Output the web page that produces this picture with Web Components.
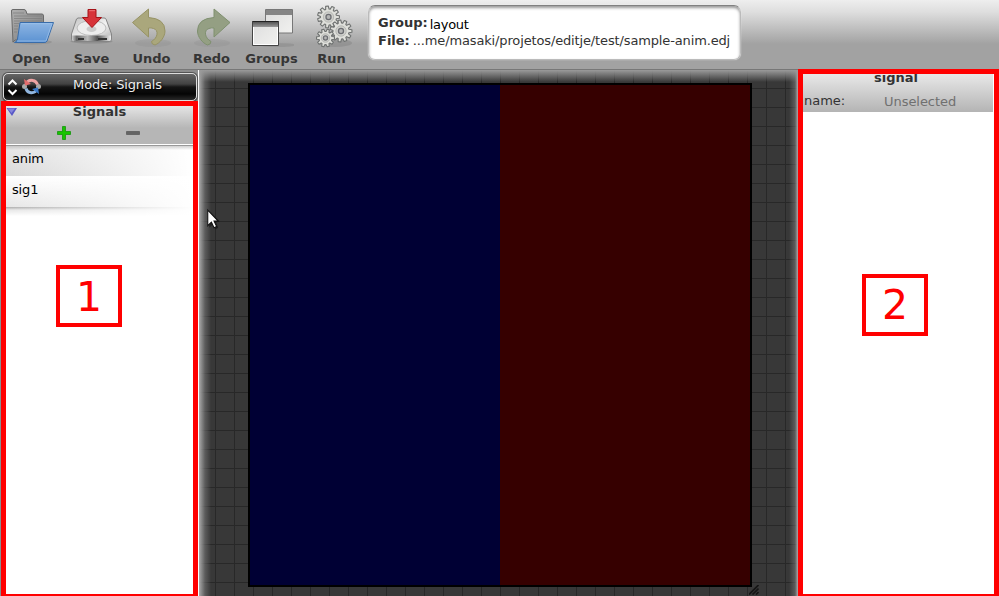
<!DOCTYPE html>
<html lang="en">
<head>
<meta charset="utf-8">
<title>Editje</title>
<style>
html,body{margin:0;width:999px;height:596px;overflow:hidden}
body{font:13px/16px "DejaVu Sans",sans-serif;color:#333}
</style>
</head>
<body>
<edj-app></edj-app>
<script>
const define = (name, css, html) => customElements.define(name, class extends HTMLElement {
  constructor() {
    super();
    const t = document.createElement('template');
    t.innerHTML = `<style>*{box-sizing:border-box}${css}</style>${html}`;
    this.attachShadow({mode: 'open'}).append(t.content.cloneNode(true));
  }
});

const gear = (cx, cy, r, n) => {
  let d = '';
  for (let i = 0; i < n; i++) {
    const a = i * 2 * Math.PI / n, s = Math.PI / n;
    [[-.75, .73], [-.42, 1], [.42, 1], [.75, .73]].forEach(([o, k], j) => {
      d += (i || j ? 'L' : 'M') + (cx + Math.cos(a + o * s) * r * k).toFixed(2) + ' ' + (cy + Math.sin(a + o * s) * r * k).toFixed(2);
    });
  }
  return `<path d="${d}Z" fill="#dedfda" stroke="#6e7170" stroke-width="1.1" stroke-linejoin="round"/><circle cx="${cx}" cy="${cy}" r="${r * .47}" fill="#d0d1cd" stroke="#b6b8b4"/><circle cx="${cx}" cy="${cy}" r="${r * .23}" fill="#b4b5b4" stroke="#6b6d71" stroke-width="1.3"/>`;
};

const icons = {
  open: `<defs><linearGradient id="f" x2="0" y2="1"><stop stop-color="#8db5e3"/><stop offset="1" stop-color="#5b92d2"/></linearGradient><linearGradient id="g" x2="1" y2="1"><stop stop-color="#b0b0b0"/><stop offset="1" stop-color="#777"/></linearGradient></defs>
  <ellipse cx="22" cy="42" rx="20" ry="2.5" fill="#777" opacity=".35"/>
  <path d="M3 42 1.5 11Q1.3 9.5 3 9.500H14Q15.500 9.500 16 11L17 14H32Q33.500 14 33.500 16V40H5Z" fill="url(#g)" stroke="#696969"/>
  <path d="M3 13H14M4 16H32M4 18.500H32M4 21H32M4 23.500H9M4 26H8M4 29H8M4 32H7" stroke="#7d7d7d" stroke-width=".7"/>
  <path d="M10 22.500H43.500L37 41Q36.500 42.500 34 42.500H4.500Q7 42 7.500 39Z" fill="url(#f)" stroke="#386caa"/><path d="M11 23.700H42L36 41H7" fill="none" stroke="#a4c6ec" stroke-width=".7"/>`,
  save: `<defs><linearGradient id="f" x2="1" y2="1"><stop stop-color="#c3c3c3"/><stop offset=".55" stop-color="#f2f2f2"/><stop offset="1" stop-color="#aaa"/></linearGradient><linearGradient id="b"><stop stop-color="#cfcfcf"/><stop offset=".12" stop-color="#666"/><stop offset=".4" stop-color="#bbb"/><stop offset=".65" stop-color="#555"/><stop offset="1" stop-color="#eee"/></linearGradient></defs>
  <ellipse cx="21.500" cy="41.500" rx="21" ry="2" fill="#555" opacity=".25"/><g transform="translate(-1 0)"><path d="M9 18H35Q36.500 18 37 19L42.500 34V39Q42.500 41.500 40 41.500H4.500Q2.500 41.500 2.500 39V34L7.500 19Z" fill="url(#f)" stroke="#858585"/><ellipse cx="22.500" cy="28" rx="14.500" ry="7.500" fill="#ededed" stroke="#bdbdbd"/><ellipse cx="22.500" cy="29" rx="5" ry="3" fill="#ccc"/><path d="M3 35.500H42V39Q42 41 40 41H5Q3 41 3 39Z" fill="url(#b)"/><path d="M9 39h6M29 39h9" stroke="#333" stroke-width="2"/><path d="M19 9.500H27V17.500H32.500L23 27.500 13.500 17.500H19Z" fill="#d73339" stroke="#a41318"/><path d="M20.200 10.700H26" stroke="#ef777a"/></g>`,
  undo: `<ellipse cx="23" cy="43" rx="18" ry="4" fill="#777" opacity=".13"/><path d="M2.500 22.500 18.500 9V17.500Q35 18.500 35 31C35 37 30 43 25 45Q21.500 44.500 21.500 41.500C28 38 29 30 23.500 28.500Q21 27.500 18.500 28V37Z" fill="#aaa77c" stroke="#979365"/>`,
  redo: `<ellipse cx="22" cy="43" rx="18" ry="4" fill="#777" opacity=".13"/><path d="M40 22.500 24 9V17.500Q7.500 18.500 7.500 31C7.500 37 12.500 43 17.500 45Q21 44.500 21 41.500C14.500 38 13.500 30 19 28.500Q21.500 27.500 24 28V37Z" fill="#949f83" stroke="#7f906f"/>`,
  groups: `<defs><linearGradient id="w" x2="1" y2="1"><stop stop-color="#ddd"/><stop offset="1" stop-color="#f1f1ef"/></linearGradient><linearGradient id="t" x2="0" y2="1"><stop stop-color="#555"/><stop offset="1" stop-color="#999"/></linearGradient></defs><ellipse cx="27" cy="45" rx="18" ry="2" fill="#777" opacity=".3"/><path d="M15.500 9.500H42.500V33H15.500Z" fill="url(#w)" stroke="#777"/><path d="M16 10H42V15H16Z" fill="#858585"/><path d="M2.500 21.500H28.500V45.500H2.500Z" fill="url(#w)" stroke="#444"/><path d="M3 22H28V27H3Z" fill="url(#t)"/><path d="M2.500 21.500H28.500" stroke="#222"/><path d="M3.500 27V44.500H27.500V27" fill="none" stroke="#fff"/>`,
  run: `<ellipse cx="25" cy="43" rx="17" ry="4" fill="#666" opacity=".25"/>${gear(18.5, 17, 11, 11)}${gear(31, 31, 11, 11)}${gear(15.5, 38, 9, 10)}`
};

customElements.define('tool-button', class extends HTMLElement {
  constructor() {
    super();
    this.attachShadow({mode: 'open'}).innerHTML = `<style>:host{display:flex;flex-direction:column;align-items:center;width:60px;height:69px;font-weight:bold;color:#353535}svg{display:block;width:44px;height:50px;flex:none}span{line-height:16px;margin:1px 1px 0 0;white-space:nowrap}</style><svg viewBox="0 0 44 50">${icons[this.getAttribute('icon')]}</svg><span><slot></slot></span>`;
  }
});

define('file-info', `:host{display:flex;flex-direction:column;width:373px;height:55px;margin:5px 0 0 6px;padding:9px 9px 0 9px;background:#fff;border:1px solid #bbb;border-top:1px solid #808080;border-radius:7px;box-shadow:inset 0 2px 3px #999,0 0 1px #fff}
div{display:flex;height:18px;line-height:16px;gap:2px;white-space:nowrap}b{color:#333}.g{color:#000;position:relative;top:2px;letter-spacing:-.3px}.p{letter-spacing:-.14px;margin-left:1px}`,
`<div><b>Group:</b><span class="g">layout</span></div><div><b>File:</b><span class="p">...me/masaki/projetos/editje/test/sample-anim.edj</span></div>`);

define('tool-bar', `:host{display:flex;height:70px;background:linear-gradient(#eee 0,#dedede 12px,#a2a2a2 44px,#a2a2a2);border-bottom:1px solid #777;padding-left:2px}`,
`<tool-button icon="open">Open</tool-button><tool-button icon="save">Save</tool-button><tool-button icon="undo">Undo</tool-button><tool-button icon="redo">Redo</tool-button><tool-button icon="groups">Groups</tool-button><tool-button icon="run">Run</tool-button><file-info></file-info>`);

define('mode-selector', `:host{display:flex;align-items:center;margin:3px 2px 0 3px;height:28px;flex:none;border:1px solid #ddd;border-radius:5px;background:linear-gradient(#656565,#424242 10px,#151515 13px,#050505 20px,#292929);box-shadow:0 0 0 1px #555,0 1px 2px #111}svg{width:43px;height:26px}span{width:140px;margin-left:3px;text-align:center;padding:0 5px 4px 0;color:#eee;letter-spacing:-.14px;text-shadow:1px 1px 2px #000}`,
`<svg viewBox="0 0 43 26"><path d="M4.500 10.500 8.500 6.500 12.500 10.500M4.500 16 8.500 20 12.500 16" fill="none" stroke="#fff" stroke-width="2"/><circle cx="20.500" cy="12.500" r="2.500" fill="#aaa"/><circle cx="34.500" cy="12.500" r="2.500" fill="#aaa"/><path d="M22 10Q24 5.500 29 6.500Q32 7 33.500 10.500" fill="none" stroke="#eda4a4" stroke-width="3"/><path d="M20 5 21 11.500 27 10Z" fill="#e26c6d"/><path d="M33 15Q31 19.500 26 18.500Q23 18 22 14.500" fill="none" stroke="#91b6df" stroke-width="3"/><path d="M35 20 34 13.500 28 15Z" fill="#3979c8"/></svg><span>Mode: Signals</span>`);

define('signal-list', `:host{display:flex;flex-direction:column;flex:1;margin:1px 1px 0;background:#fff}
header{height:43px;background:linear-gradient(#eee,#d6d6d6 11px,#b6b6b6 26px);border-bottom:1px solid #fff;display:grid;grid-template-columns:65px 1fr 65px;grid-template-rows:17px 1fr;padding-top:1px;flex:none}
header>svg{width:62px;height:16px}b{text-align:center;line-height:17px}.tools{grid-column:1/4;display:flex;padding-left:56px;gap:55px}.tools svg{width:14px;height:14px;margin-top:6px}
.row{height:31px;padding:5px 0 0 11px;color:#000;flex:none;line-height:17px;letter-spacing:-.15px}.a{padding-top:4px;background:linear-gradient(#aaa8 0,#fff0 4px),linear-gradient(90deg,transparent,#fff 98%),linear-gradient(#e6e6e6,#d8d8d8);border-top:1px solid #999}.s{background:linear-gradient(90deg,transparent,#fff 98%),linear-gradient(#fff,#e6e6e6)}.edge{height:9px;background:linear-gradient(90deg,transparent,#fff 98%),linear-gradient(#aaa,#e7e7e7 3px,#fff)}`,
`<header><svg viewBox="0 0 62 16"><path d="M5.500 5H16L11 13Z" fill="#5959c7"/><path d="M6.500 5.500H14L10.500 10Z" fill="#8686dd"/></svg><b>Signals</b><div class="tools"><svg viewBox="0 0 14 14"><path d="M5.500 .5H8.500V5.500H13.500V8.500H8.500V13.500H5.500V8.500H.5V5.500H5.500Z" fill="#18c400" stroke="#079000" stroke-width=".7"/></svg><svg viewBox="0 0 14 14"><path d="M.5 5.500H13.500V8.500H.5Z" fill="#646464" stroke="#666"/></svg></div></header><div class="row a">anim</div><div class="row s">sig1</div><div class="edge"></div>`);

define('signals-panel', `:host{display:flex;flex-direction:column;width:199px;background:linear-gradient(90deg,#8d8d8d 198px,#fff 198px)}`, `<mode-selector></mode-selector><signal-list></signal-list>`);

define('edit-canvas', `:host{display:grid;place-items:start center;flex:1;padding:13px 0 0 3px;overflow:hidden;position:relative;
background:linear-gradient(#9a9a9a,#9a9a9a00 12px),linear-gradient(90deg,#aaa,#77777790 6px,transparent 12px),linear-gradient(270deg,#aaa,#77777790 3px,transparent 9px),repeating-linear-gradient(90deg,transparent 0 16px,#282828 16px 17px,transparent 17px 19px),repeating-linear-gradient(#383838 0 18px,#282828 18px 19px)}
.stage{width:504px;height:504px;border:2px solid #000;display:grid;grid-template-columns:1fr 1fr}.l{background:#000034}.r{background:#360000}
.grip{position:absolute;left:550px;top:515px;width:10px;height:10px}.cursor{position:absolute;left:7px;top:138px;width:15px;height:24px}`,
`<div class="stage"><div class="l"></div><div class="r"></div></div><svg class="grip" viewBox="0 0 10 10"><path d="M0 9.500 9.500 0M3.500 9.500 9.500 3.500M7 9.500 9.500 7" stroke="#151515" stroke-width="1.700"/></svg><svg class="cursor" viewBox="0 0 14 23"><path d="M2 2 3 19 6.500 15.500 9 20.500 11.500 19 9.500 14 13 13Z" fill="#1119"/><path d="M1.500 2V17L5 13.500 7.500 19 10 17.800 7.500 12.500H11.500Z" fill="#fff" stroke="#111" stroke-width="1"/></svg>`);

define('property-panel', `:host{display:flex;flex-direction:column;width:201px;background:#fff;padding-left:5px;overflow:hidden}
section{height:42px;width:190px;background:linear-gradient(#eee,#ddd 12px,#b4b4b4);flex:none}b{display:block;text-align:center;margin-top:-1px;padding-right:4px;height:24px;line-height:18px}.line{display:flex}.line span{width:81px;padding-left:1px}.line i{font-style:normal;color:#707070;position:relative;top:1px;letter-spacing:-.05px}`,
`<section><b>signal</b><div class="line"><span>name:</span><i>Unselected</i></div></section>`);

/* Numbered red callouts that lie over the two side panels. */
customElements.define('area-mark', class extends HTMLElement {
  constructor() {
    super();
    this.attachShadow({mode: 'open'}).innerHTML = `<style>:host{position:absolute;box-sizing:border-box;border:5px solid red;color:red}span{position:absolute;box-sizing:border-box;left:var(--nx);top:var(--ny);width:66px;height:62px;border:4px solid red;text-align:center;font-size:41px;line-height:var(--lh,55px)}</style><span><slot></slot></span>`;
  }
});

define('edj-app', `:host{display:flex;flex-direction:column;width:999px;height:596px;position:relative;overflow:hidden}main{display:flex;flex:1;min-height:0}.one{left:1px;top:101px;width:197px;height:498px;--nx:50px;--ny:159px;--lh:57px}.two{left:798px;top:69px;width:201px;height:530px;--nx:59px;--ny:200px}.one,.two{clip-path:none}`,
`<tool-bar></tool-bar><main><signals-panel></signals-panel><edit-canvas></edit-canvas><property-panel></property-panel></main><area-mark class="one">1</area-mark><area-mark class="two">2</area-mark>`);
</script>
</body>
</html>
